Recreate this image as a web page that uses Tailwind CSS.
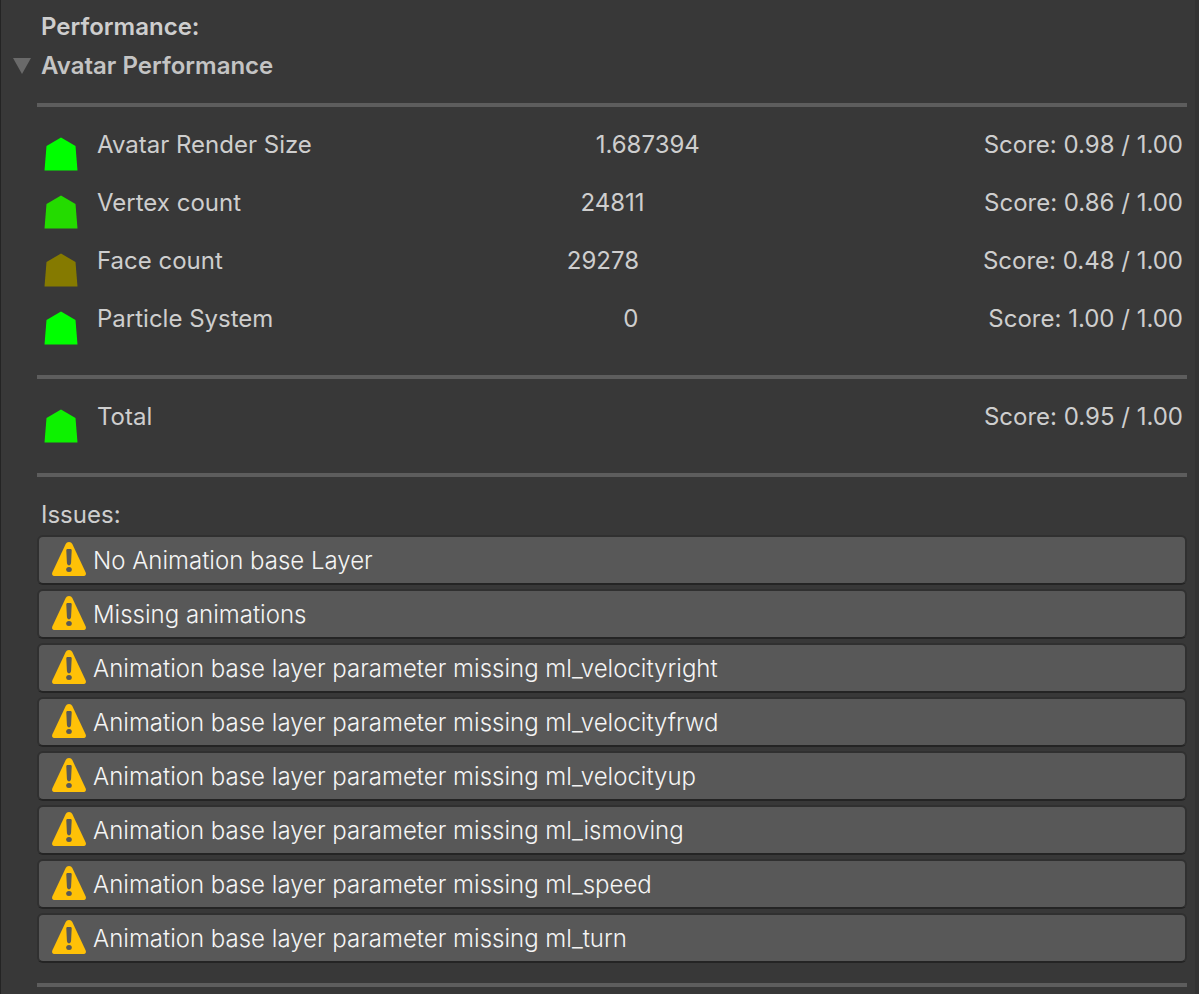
<!DOCTYPE html>
<html lang="en">
<head>
  <meta charset="utf-8">
  <meta name="viewport" content="width=device-width, initial-scale=1">
  <title>Avatar Performance</title>
  <script src="https://cdn.jsdelivr.net/npm/@tailwindcss/browser@4"></script>
</head>
<body class="min-h-screen bg-[#383838] border-l border-l-[#242424] font-['Inter',sans-serif] text-2xl/9 text-[#cecece]">
  <!-- icons shared by the rows -->
  <svg class="hidden" aria-hidden="true">
    <symbol id="badge" viewBox="0 0 34 34">
      <path d="M17 0.5 L31.5 9 L33.5 33.5 H0.5 L2.5 9 Z"/>
    </symbol>
    <symbol id="warning" viewBox="0 0 34 34">
      <path fill="#ffc107" d="M17 0 C18.6 0 19.6 0.7 20.3 2 L33.7 30.4 C34.3 32.6 33.6 34 32 34 H2 C0.4 34 -0.3 32.6 0.3 30.4 L13.7 2 C14.4 0.7 15.4 0 17 0 Z"/>
      <path fill="#585858" d="M15.6 7 H18.4 C19.3 7 19.8 7.6 19.7 8.6 L19.1 20.5 C19 22.4 18.2 23.3 17 23.3 C15.8 23.3 15 22.4 14.9 20.5 L14.3 8.6 C14.2 7.6 14.7 7 15.6 7 Z"/>
      <ellipse cx="17" cy="27.6" rx="2.8" ry="2.5" fill="#585858"/>
    </symbol>
  </svg>

  <main class="min-h-screen border-r-4 border-[#333333] pl-9 pr-2 pt-[9px]">
    <h1 class="pl-1 font-semibold">Performance:</h1>

    <details open class="group">
      <summary class="relative mt-[3px] flex cursor-pointer list-none pl-1 font-semibold text-[#c4c4c4]">
        <svg class="absolute -left-6 top-2.5 h-4 w-[18px] -rotate-90 group-open:rotate-0" viewBox="0 0 18 16" fill="#6a6a6a" aria-hidden="true"><path d="M0 0 H18 L9 16 Z"/></svg>
        Avatar Performance
      </summary>

      <hr class="mt-[19px] mb-5 border-t-4 border-[#5d5d5d]">
      <ul>
        <li class="flex h-[58px] items-start pl-[7px] pr-1">
          <svg class="mt-2.5 mr-[19px] size-[34px] shrink-0" fill="#00ff00" aria-hidden="true"><use href="#badge"/></svg>
          <div class="flex grow justify-between"><span>Avatar Render Size</span><span>1.687394</span><span>Score: 0.98 / 1.00</span></div>
        </li>
        <li class="flex h-[58px] items-start pl-[7px] pr-1">
          <svg class="mt-2.5 mr-[19px] size-[34px] shrink-0" fill="#24db00" aria-hidden="true"><use href="#badge"/></svg>
          <div class="flex grow justify-between"><span>Vertex count</span><span>24811</span><span>Score: 0.86 / 1.00</span></div>
        </li>
        <li class="flex h-[58px] items-start pl-[7px] pr-1">
          <svg class="mt-2.5 mr-[19px] size-[34px] shrink-0" fill="#857a00" aria-hidden="true"><use href="#badge"/></svg>
          <div class="flex grow justify-between"><span>Face count</span><span>29278</span><span>Score: 0.48 / 1.00</span></div>
        </li>
        <li class="flex h-[58px] items-start pl-[7px] pr-1">
          <svg class="mt-2.5 mr-[19px] size-[34px] shrink-0" fill="#00ff00" aria-hidden="true"><use href="#badge"/></svg>
          <div class="flex grow justify-between"><span>Particle System</span><span>0</span><span>Score: 1.00 / 1.00</span></div>
        </li>
      </ul>

      <hr class="mt-4 mb-5 border-t-4 border-[#5d5d5d]">
      <div class="flex h-[58px] items-start pl-[7px] pr-1">
        <svg class="mt-2.5 mr-[19px] size-[34px] shrink-0" fill="#0df200" aria-hidden="true"><use href="#badge"/></svg>
        <div class="flex grow justify-between"><span>Total</span><span>Score: 0.95 / 1.00</span></div>
      </div>

      <hr class="mt-4 mb-5 border-t-4 border-[#5d5d5d]">
      <h2 class="pl-1">Issues:</h2>
      <div class="flex flex-col gap-1 pt-0.5 pb-1 font-light text-[#f4f4f4]">
        <button type="button" class="flex h-[50px] items-center gap-[7px] rounded-md border-2 border-[#303030] border-b-[#242424] bg-[#585858] pt-0.5 pl-[13px] text-left">
          <svg class="mb-1 size-[34px] shrink-0" aria-hidden="true"><use href="#warning"/></svg>No Animation base Layer
        </button>
        <button type="button" class="flex h-[50px] items-center gap-[7px] rounded-md border-2 border-[#303030] border-b-[#242424] bg-[#585858] pt-0.5 pl-[13px] text-left">
          <svg class="mb-1 size-[34px] shrink-0" aria-hidden="true"><use href="#warning"/></svg>Missing animations
        </button>
        <button type="button" class="flex h-[50px] items-center gap-[7px] rounded-md border-2 border-[#303030] border-b-[#242424] bg-[#585858] pt-0.5 pl-[13px] text-left">
          <svg class="mb-1 size-[34px] shrink-0" aria-hidden="true"><use href="#warning"/></svg>Animation base layer parameter missing ml_velocityright
        </button>
        <button type="button" class="flex h-[50px] items-center gap-[7px] rounded-md border-2 border-[#303030] border-b-[#242424] bg-[#585858] pt-0.5 pl-[13px] text-left">
          <svg class="mb-1 size-[34px] shrink-0" aria-hidden="true"><use href="#warning"/></svg>Animation base layer parameter missing ml_velocityfrwd
        </button>
        <button type="button" class="flex h-[50px] items-center gap-[7px] rounded-md border-2 border-[#303030] border-b-[#242424] bg-[#585858] pt-0.5 pl-[13px] text-left">
          <svg class="mb-1 size-[34px] shrink-0" aria-hidden="true"><use href="#warning"/></svg>Animation base layer parameter missing ml_velocityup
        </button>
        <button type="button" class="flex h-[50px] items-center gap-[7px] rounded-md border-2 border-[#303030] border-b-[#242424] bg-[#585858] pt-0.5 pl-[13px] text-left">
          <svg class="mb-1 size-[34px] shrink-0" aria-hidden="true"><use href="#warning"/></svg>Animation base layer parameter missing ml_ismoving
        </button>
        <button type="button" class="flex h-[50px] items-center gap-[7px] rounded-md border-2 border-[#303030] border-b-[#242424] bg-[#585858] pt-0.5 pl-[13px] text-left">
          <svg class="mb-1 size-[34px] shrink-0" aria-hidden="true"><use href="#warning"/></svg>Animation base layer parameter missing ml_speed
        </button>
        <button type="button" class="flex h-[50px] items-center gap-[7px] rounded-md border-2 border-[#303030] border-b-[#242424] bg-[#585858] pt-0.5 pl-[13px] text-left">
          <svg class="mb-1 size-[34px] shrink-0" aria-hidden="true"><use href="#warning"/></svg>Animation base layer parameter missing ml_turn
        </button>
      </div>

      <hr class="mt-4 border-t-4 border-[#5d5d5d]">
    </details>
  </main>
</body>
</html>
